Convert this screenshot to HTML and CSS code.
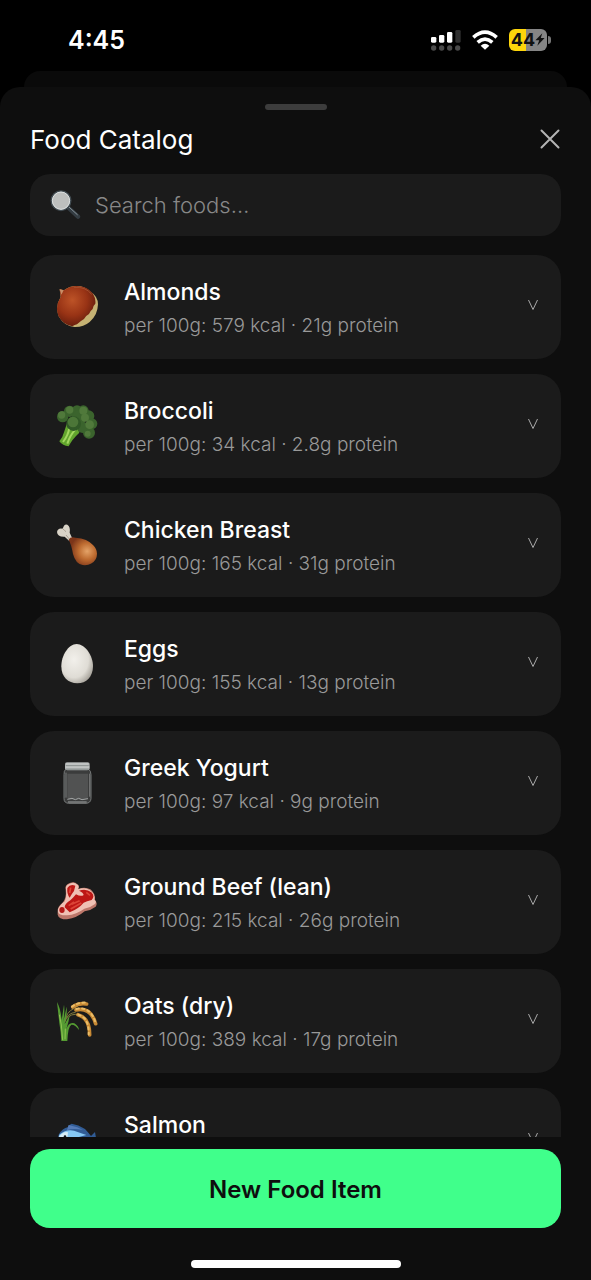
FILE: index.html
```html
<!DOCTYPE html>
<html lang="en">
<head>
<meta charset="utf-8">
<meta name="viewport" content="width=device-width, initial-scale=1">
<title>Food Catalog</title>
<link rel="stylesheet" href="styles.css">
</head>
<body>
<div class="app">
  <header class="status">
    <span class="status-time">4:45</span>
    <div class="status-icons">
      <svg class="signal" viewBox="0 0 90 66" aria-hidden="true">
        <g fill="#fff"><rect x="0" y="24" width="16" height="17" rx="4"/><rect x="24" y="18" width="16" height="23" rx="4"/><rect x="48" y="9" width="16" height="32" rx="4"/></g>
        <rect x="73" y="3" width="16" height="38" rx="4" fill="#303030"/>
        <g fill="#4a4a4a"><circle cx="8" cy="57" r="8"/><circle cx="32" cy="57" r="8"/><circle cx="56" cy="57" r="8"/><circle cx="80" cy="57" r="8"/></g>
      </svg>
      <svg class="wifi" viewBox="0 0 78 60" aria-hidden="true">
        <g fill="none" stroke="#fff" stroke-width="11"><path d="M4 22Q39-9 74 22"/><path d="M17 37Q39 18 61 37"/></g>
        <path d="M39 59L26 47Q39 36 52 47Z" fill="#fff"/>
      </svg>
      <div class="battery"><span class="battery-level">44</span><svg class="bolt" viewBox="0 0 26 32" aria-hidden="true"><path d="M19 0L1 18H11L6 32L25 12H15Z"/></svg></div>
    </div>
  </header>
  <div class="sheet-behind"></div>
  <main class="sheet">
    <div class="grabber"></div>
    <div class="sheet-head">
      <h1 class="title">Food Catalog</h1>
      <button class="close" type="button" aria-label="Close"><svg viewBox="0 0 20 20" aria-hidden="true"><path d="M1.500 1.500L18.500 18.500M18.500 1.500L1.500 18.500"/></svg></button>
    </div>
    <label class="search">
      <svg class="search-icon" viewBox="0 0 93 90" aria-hidden="true">
        <path d="M56 54L84 80" stroke="#343c42" stroke-width="13" stroke-linecap="round"/>
        <path d="M58 52L82 74" stroke="#87939a" stroke-width="3" stroke-linecap="round"/>
        <circle cx="33" cy="32" r="29" fill="#b9bec0" stroke="#404a50" stroke-width="5"/>
        <circle cx="33" cy="32" r="26" fill="#bdbfbe" stroke="#dce0e0" stroke-width="3"/>
      </svg>
      <input class="search-input" type="text" placeholder="Search foods…" aria-label="Search foods">
    </label>
    <ul class="foods">
      <li><button class="food" type="button">
        <svg class="food-icon" viewBox="50 36 129 135" aria-hidden="true">
          <defs><radialGradient id="nut" cx=".4" cy=".35" r=".7"><stop offset="0" stop-color="#bd5327"/><stop offset=".55" stop-color="#983315"/><stop offset="1" stop-color="#5e1a0c"/></radialGradient></defs>
          <path d="M61 55L74 58Q90 45 112 45Q137 45 154 62Q176 76 176 100Q175 133 151 153Q132 169 105 168Q74 165 58 136Q47 106 64 78Z" fill="#c5b273"/>
          <path d="M61 55L74 58Q90 45 112 45Q145 46 161 68Q170 83 168 98Q161 104 160 114Q152 120 149 129Q139 134 134 144Q122 151 113 160Q106 162 99 166Q69 159 57 134Q46 106 64 78Z" fill="url(#nut)"/>
          <path d="M61 55L73 58L66 71Z" fill="#c98f68"/><path d="M104 49Q138 46 157 70" fill="none" stroke="#a3512f" stroke-width="3"/>
        </svg>
        <span class="food-text"><span class="food-name">Almonds</span><span class="food-info">per 100g: 579 kcal · 21g protein</span></span>
        <svg class="chevron" viewBox="0 0 12 12" aria-hidden="true"><path d="M1.500 1L6 10.500L10.500 1"/></svg>
      </button></li>
      <li><button class="food" type="button">
        <svg class="food-icon" viewBox="50 33 129 135" aria-hidden="true">
          <path d="M82 100L74 124Q70 140 60 151Q70 165 88 166Q98 145 120 125L112 100Z" fill="#61a52d"/>
          <path d="M90 110Q87 133 71 153M108 116Q92 133 84 158" fill="none" stroke="#a2d760" stroke-width="6"/>
          <g fill="#3b642d"><circle cx="70" cy="77" r="17"/><circle cx="91" cy="61" r="17"/><circle cx="113" cy="60" r="17"/><circle cx="132" cy="59" r="16"/><circle cx="148" cy="75" r="17"/><circle cx="158" cy="98" r="16"/><circle cx="149" cy="125" r="18"/><circle cx="130" cy="109" r="17"/><circle cx="120" cy="79" r="22"/></g>
          <g fill="#50793b"><circle cx="67" cy="72" r="11"/><circle cx="91" cy="57" r="11"/><circle cx="132" cy="59" r="12"/><circle cx="137" cy="80" r="12"/><circle cx="151" cy="101" r="13"/><circle cx="145" cy="128" r="9"/></g>
          <circle cx="103" cy="98" r="22" fill="#315927"/><circle cx="101" cy="93" r="16" fill="#4c7638"/>
        </svg>
        <span class="food-text"><span class="food-name">Broccoli</span><span class="food-info">per 100g: 34 kcal · 2.8g protein</span></span>
        <svg class="chevron" viewBox="0 0 12 12" aria-hidden="true"><path d="M1.500 1L6 10.500L10.500 1"/></svg>
      </button></li>
      <li><button class="food" type="button">
        <svg class="food-icon" viewBox="50 30 129 135" aria-hidden="true">
          <defs><radialGradient id="leg" cx=".65" cy=".5" r=".6"><stop offset="0" stop-color="#e4a368"/><stop offset=".5" stop-color="#bd6b30"/><stop offset="1" stop-color="#7c3519"/></radialGradient></defs>
          <path d="M98 80L91 65Q94 47 84 41Q75 37 70 53Q55 50 53 63Q54 78 76 77L89 89Z" fill="#d9d3c7"/>
          <path d="M70 53Q76 59 80 62M80 72L90 84" stroke="#a9a093" stroke-width="3" fill="none"/>
          <path d="M88 86Q93 76 108 80Q145 83 161 102Q180 121 169 145Q157 165 130 162Q109 159 101 129Q96 100 88 86Z" fill="url(#leg)"/>
        </svg>
        <span class="food-text"><span class="food-name">Chicken Breast</span><span class="food-info">per 100g: 165 kcal · 31g protein</span></span>
        <svg class="chevron" viewBox="0 0 12 12" aria-hidden="true"><path d="M1.500 1L6 10.500L10.500 1"/></svg>
      </button></li>
      <li><button class="food" type="button">
        <svg class="food-icon" viewBox="50 30 129 135" aria-hidden="true">
          <defs><radialGradient id="egg" cx=".4" cy=".4" r=".65"><stop offset="0" stop-color="#f2f0eb"/><stop offset=".7" stop-color="#dfdcd5"/><stop offset="1" stop-color="#aaa69e"/></radialGradient></defs>
          <path d="M112 42C137 42 161 77 161 108C161 141 141 160 114 160C86 160 66 141 66 109C66 77 87 42 112 42Z" fill="url(#egg)"/>
        </svg>
        <span class="food-text"><span class="food-name">Eggs</span><span class="food-info">per 100g: 155 kcal · 13g protein</span></span>
        <svg class="chevron" viewBox="0 0 12 12" aria-hidden="true"><path d="M1.500 1L6 10.500L10.500 1"/></svg>
      </button></li>
      <li><button class="food" type="button">
        <svg class="food-icon" viewBox="50 27 129 135" aria-hidden="true">
          <path d="M80 57Q73 62 74 74V146Q74 159 88 160H140Q154 159 155 146V74Q155 62 147 57Z" fill="#3b3c3c" stroke="#777a7a" stroke-width="3"/>
          <path d="M84 71V143Q85 149 94 149H135Q146 149 146 139V71Z" fill="#515252"/>
          <path d="M80 68V143M151 71V140" stroke="#999c9c" stroke-width="2"/>
          <path d="M84 148L98 145L108 149L118 145L128 149L146 146M86 156H142" fill="none" stroke="#a1a4a4" stroke-width="3"/>
          <path d="M77 42Q77 37 83 37H145Q151 37 151 42V56Q148 61 143 61H84Q77 60 77 55Z" fill="#a9adad"/>
          <path d="M80 42H148M78 51H150" stroke="#d6d8d7" stroke-width="3"/><path d="M80 47H148M81 58H147" stroke="#7e8584" stroke-width="2"/>
        </svg>
        <span class="food-text"><span class="food-name">Greek Yogurt</span><span class="food-info">per 100g: 97 kcal · 9g protein</span></span>
        <svg class="chevron" viewBox="0 0 12 12" aria-hidden="true"><path d="M1.500 1L6 10.500L10.500 1"/></svg>
      </button></li>
      <li><button class="food" type="button">
        <svg class="food-icon" viewBox="50 27 129 135" aria-hidden="true">
          <path d="M55 126Q54 113 70 101Q82 86 79 62Q75 48 91 42Q106 36 114 46Q122 50 117 60Q137 52 153 61Q169 73 167 93Q176 104 169 113Q153 125 136 127Q113 147 83 151Q58 151 55 137Z" fill="#bd776a"/>
          <path d="M56 121Q65 103 75 98Q83 85 80 62Q77 49 91 44Q105 37 112 46Q121 50 116 61Q138 54 152 64Q168 75 165 92Q173 98 167 105Q152 117 135 119Q112 136 83 139Q59 140 56 129Z" fill="#efc0b3"/>
          <path d="M84 57Q92 44 108 50L104 66Q97 75 91 86Q82 75 84 57ZM119 65Q141 58 156 70Q168 82 157 93Q142 97 133 101Q118 119 91 130L76 115Q76 104 93 94Q100 88 110 76Q125 84 133 78Q132 71 119 65Z" fill="#bd1715"/>
          <ellipse cx="68" cy="123" rx="8" ry="9" fill="#b41a18"/>
          <path d="M94 56L91 72M97 106L121 95M94 120L126 102M141 70L152 79M88 110L104 99" stroke="#dc4537" stroke-width="5" fill="none"/>
        </svg>
        <span class="food-text"><span class="food-name">Ground Beef (lean)</span><span class="food-info">per 100g: 215 kcal · 26g protein</span></span>
        <svg class="chevron" viewBox="0 0 12 12" aria-hidden="true"><path d="M1.500 1L6 10.500L10.500 1"/></svg>
      </button></li>
      <li><button class="food" type="button">
        <svg class="food-icon" viewBox="50 39 129 135" aria-hidden="true">
          <path d="M78 113Q79 84 105 73L117 65M76 110Q86 87 109 85M78 108Q96 85 119 93" fill="none" stroke="#827a3c" stroke-width="3"/>
          <path d="M66 171Q65 144 60 117L53 54Q64 74 67 108L74 62Q77 80 72 113L82 68Q84 92 76 120L91 94Q89 111 81 135Q89 112 105 118Q118 126 119 138Q107 121 96 122Q86 127 84 171Z" fill="#559b32"/>
          <path d="M70 168L66 123L60 92M77 166L78 134" stroke="#91c451" stroke-width="3" fill="none"/>
          <g fill="none" stroke="#c88a35" stroke-linecap="round" stroke-width="11"><path d="M100 69Q118 56 142 60"/><path d="M110 78Q154 68 169 119"/><path d="M116 92Q151 102 151 153"/></g>
          <g fill="none" stroke="#eabd68" stroke-linecap="round" stroke-width="6" stroke-dasharray="7 10"><path d="M98 68Q117 54 142 56"/><path d="M111 75Q153 65 169 117"/><path d="M117 92Q150 102 148 151"/></g>
        </svg>
        <span class="food-text"><span class="food-name">Oats (dry)</span><span class="food-info">per 100g: 389 kcal · 17g protein</span></span>
        <svg class="chevron" viewBox="0 0 12 12" aria-hidden="true"><path d="M1.500 1L6 10.500L10.500 1"/></svg>
      </button></li>
      <li><button class="food" type="button">
        <svg class="food-icon" viewBox="0 0 129 135" aria-hidden="true">
          <path d="M8 56Q20 36 35 34Q37 26 47 23Q67 26 87 39Q99 52 105 60L117 48L121 71L107 95Q60 115 5 73Z" fill="#315c95"/>
          <path d="M38 27L64 34L81 42Q53 36 33 42Z" fill="#557bb7"/>
          <path d="M9 57Q28 39 54 44L91 57Q48 71 10 66Z" fill="#86c8f3"/>
          <path d="M8 62Q24 44 36 49L34 66Z" fill="#d7edf5"/>
          <circle cx="27" cy="62" r="4" fill="#101820"/>
        </svg>
        <span class="food-text"><span class="food-name">Salmon</span><span class="food-info"></span></span>
        <svg class="chevron" viewBox="0 0 12 12" aria-hidden="true"><path d="M1.500 1L6 10.500L10.500 1"/></svg>
      </button></li>
    </ul>
    <footer class="actions">
      <button class="new-item" type="button">New Food Item</button>
      <div class="home-indicator"></div>
    </footer>
  </main>
</div>
</body>
</html>
```
FILE: styles.css
```css
* { box-sizing: border-box; }
body { margin: 0; background: #000; color: #fff; font-family: Inter, Roboto, sans-serif; }
button, input { font: inherit; color: inherit; border: 0; background: none; padding: 0; }
h1, ul { margin: 0; padding: 0; font-weight: 400; list-style: none; }
svg { display: block; flex: none; }

.app { height: 100vh; display: flex; flex-direction: column; }

.status { flex: none; height: 71px; padding: 8px 44px 0 68px; display: flex; align-items: center; justify-content: space-between; }
.status-time { font-size: 25px; font-weight: 600; }
.status-icons { display: flex; align-items: center; gap: 11px; }
.signal { width: 30px; height: 22px; }
.wifi { width: 26px; height: 20px; }
.battery { position: relative; width: 38px; height: 22px; border-radius: 6px; background: linear-gradient(90deg, #fdd50b 44%, #858585 44%); color: #111; display: flex; align-items: center; justify-content: center; }
.battery::after { content: ""; position: absolute; right: -4px; top: 7px; width: 3px; height: 8px; border-radius: 0 3px 3px 0; background: #777; }
.battery-level { font-size: 18px; line-height: 22px; font-weight: 700; }
.bolt { width: 10px; height: 13px; fill: #111; }

.sheet-behind { flex: none; height: 16px; margin: 0 24px; border-radius: 16px 16px 0 0; background: #0a0a0a; }
.sheet { flex: 1; min-height: 0; display: flex; flex-direction: column; padding: 17px 30px 0; border-radius: 20px 20px 0 0; background: #0e0e0e; }
.grabber { flex: none; align-self: center; width: 62px; height: 6px; border-radius: 3px; background: #3c3c3c; }
.sheet-head { flex: none; display: flex; align-items: center; justify-content: space-between; height: 58px; margin-bottom: 6px; }
.title { padding-top: 2px; font-size: 26px; line-height: 32px; }
.close svg { width: 20px; height: 20px; margin-right: 1px; fill: none; stroke: #b4b4b4; stroke-width: 2; stroke-linecap: round; }

.search { flex: none; height: 62px; margin-bottom: 19px; padding: 0 20px; display: flex; align-items: center; gap: 14px; border-radius: 20px; background: #1b1b1b; }
.search-icon { width: 31px; height: 30px; }
.search-input { flex: 1; min-width: 0; font-size: 22px; font-weight: 300; outline: none; }
.search-input::placeholder { color: #888; opacity: 1; }

.foods { flex: 1; min-height: 0; overflow-y: auto; scrollbar-width: none; display: flex; flex-direction: column; gap: 15px; }
.food { width: 100%; height: 104px; padding: 0 22px 4px 26px; display: flex; align-items: center; gap: 25px; border-radius: 24px; background: #1b1b1b; text-align: left; }
.food-icon { width: 43px; height: 45px; }
.food-text { flex: 1; min-width: 0; padding-top: 8px; display: flex; flex-direction: column; }
.food-name { font-size: 23px; line-height: 33px; font-weight: 500; }
.food-info { min-height: 33px; font-size: 19px; line-height: 33px; font-weight: 300; color: #999; }
.chevron { width: 12px; height: 12px; fill: none; stroke: #aaa; stroke-width: 1; }

.actions { flex: none; padding: 12px 0; display: flex; flex-direction: column; align-items: center; gap: 32px; }
.new-item { width: 100%; height: 79px; padding-top: 2px; border-radius: 20px; background: #40ff8b; color: #0e0e0e; font-size: 24px; font-weight: 600; }
.home-indicator { width: 210px; height: 8px; border-radius: 4px; background: #fff; }
```
